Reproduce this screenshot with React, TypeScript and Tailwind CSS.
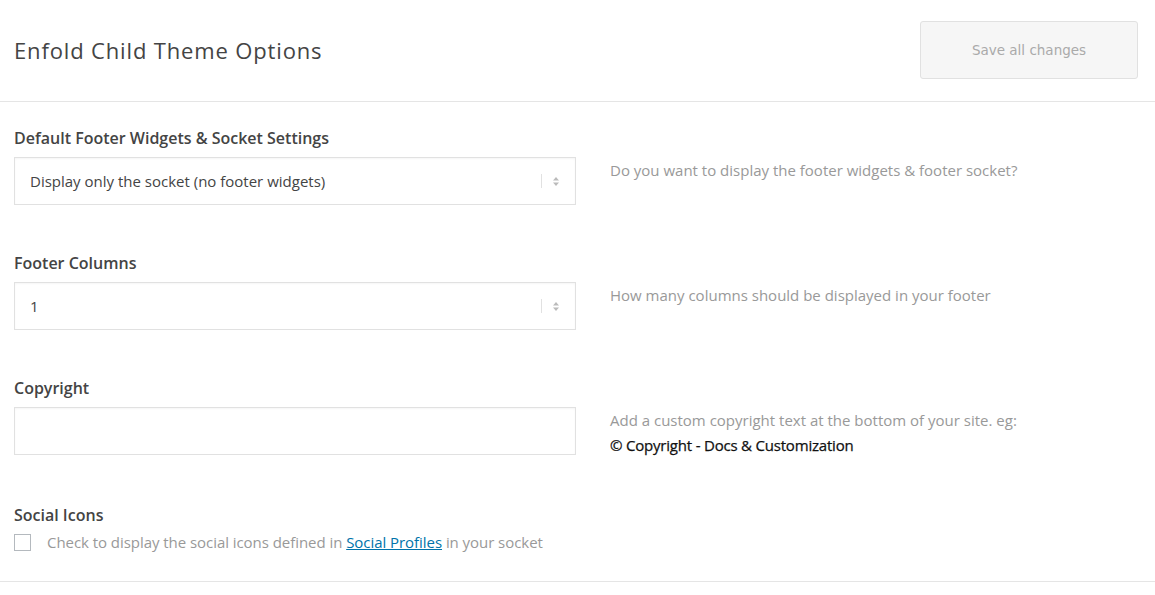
import React from 'react';

const font = { fontFamily: '"Open Sans", "Noto Sans", sans-serif' };

function SelectBox({ value }: { value: string }) {
  return (
    <div className="flex h-[48px] w-[562px] items-center border border-[#e1e1e1] bg-white pl-[15px] pr-[14px] shadow-[inset_0_1px_2px_rgba(0,0,0,0.04)]">
      <span className="flex-1 text-[15px] text-[#444]">{value}</span>
      <span className="mr-[10px] h-[14px] w-px bg-[#e1e1e1]" />
      <svg width="8" height="11" viewBox="0 0 8 11" className="mr-[1px]">
        <path d="M4 1 L7 4.5 H1 Z" fill="#bbb" />
        <path d="M4 10 L7 6.5 H1 Z" fill="#bbb" />
      </svg>
    </div>
  );
}

function Row({
  label,
  children,
  desc,
}: {
  label: string;
  children: React.ReactNode;
  desc: React.ReactNode;
}) {
  return (
    <div className="h-[125px] pt-[23px]">
      <h3 className="text-[16px] font-semibold leading-[26px] text-[#444]">{label}</h3>
      <div className="mt-[6px] flex">
        {children}
        <div className="ml-[34px] pt-[1px] text-[15px] leading-[25px] text-[#999]">{desc}</div>
      </div>
    </div>
  );
}

export default function App() {
  return (
    <div className="min-h-[595px] w-[1155px] bg-white" style={font}>
      <header className="flex h-[102px] items-start justify-between border-b border-[#e5e5e5] pl-[14px] pr-[17px] pt-[21px]">
        <h1 className="mt-[14px] text-[22px] leading-[30px] tracking-[0.85px] text-[#444]">Enfold Child Theme Options</h1>
        <button
          className="h-[58px] w-[218px] rounded-[3px] border border-[#e1e1e1] bg-[#f6f6f6] text-[13.5px] text-[#aaa]"
          style={{ fontFamily: '"DejaVu Sans", sans-serif' }}
        >
          Save all changes
        </button>
      </header>

      <div className="border-b border-[#e5e5e5] px-[14px]">
        <Row label="Default Footer Widgets & Socket Settings" desc="Do you want to display the footer widgets & footer socket?">
          <SelectBox value="Display only the socket (no footer widgets)" />
        </Row>
        <Row label="Footer Columns" desc="How many columns should be displayed in your footer">
          <SelectBox value="1" />
        </Row>
        <Row
          label="Copyright"
          desc={
            <>
              <div>Add a custom copyright text at the bottom of your site. eg:</div>
              <div className="tracking-[-0.2px] text-[#111] [-webkit-text-stroke:0.25px_#111]">© Copyright - Docs &amp; Customization</div>
            </>
          }
        >
          <div className="h-[48px] w-[562px] border border-[#e1e1e1] bg-white shadow-[inset_0_1px_2px_rgba(0,0,0,0.04)]" />
        </Row>
        <div className="h-[104px] pt-[25px]">
          <h3 className="text-[16px] font-semibold leading-[26px] text-[#444]">Social Icons</h3>
          <div className="mt-[3px] flex items-center">
            <span className="h-[17px] w-[17px] border border-[#b4b9be] bg-white" />
            <span className="ml-[16px] text-[15px] tracking-[-0.05px] text-[#999]">
              Check to display the social icons defined in{' '}
              <a href="#" className="text-[#0073aa] underline">Social Profiles</a> in your socket
            </span>
          </div>
        </div>
      </div>
    </div>
  );
}
